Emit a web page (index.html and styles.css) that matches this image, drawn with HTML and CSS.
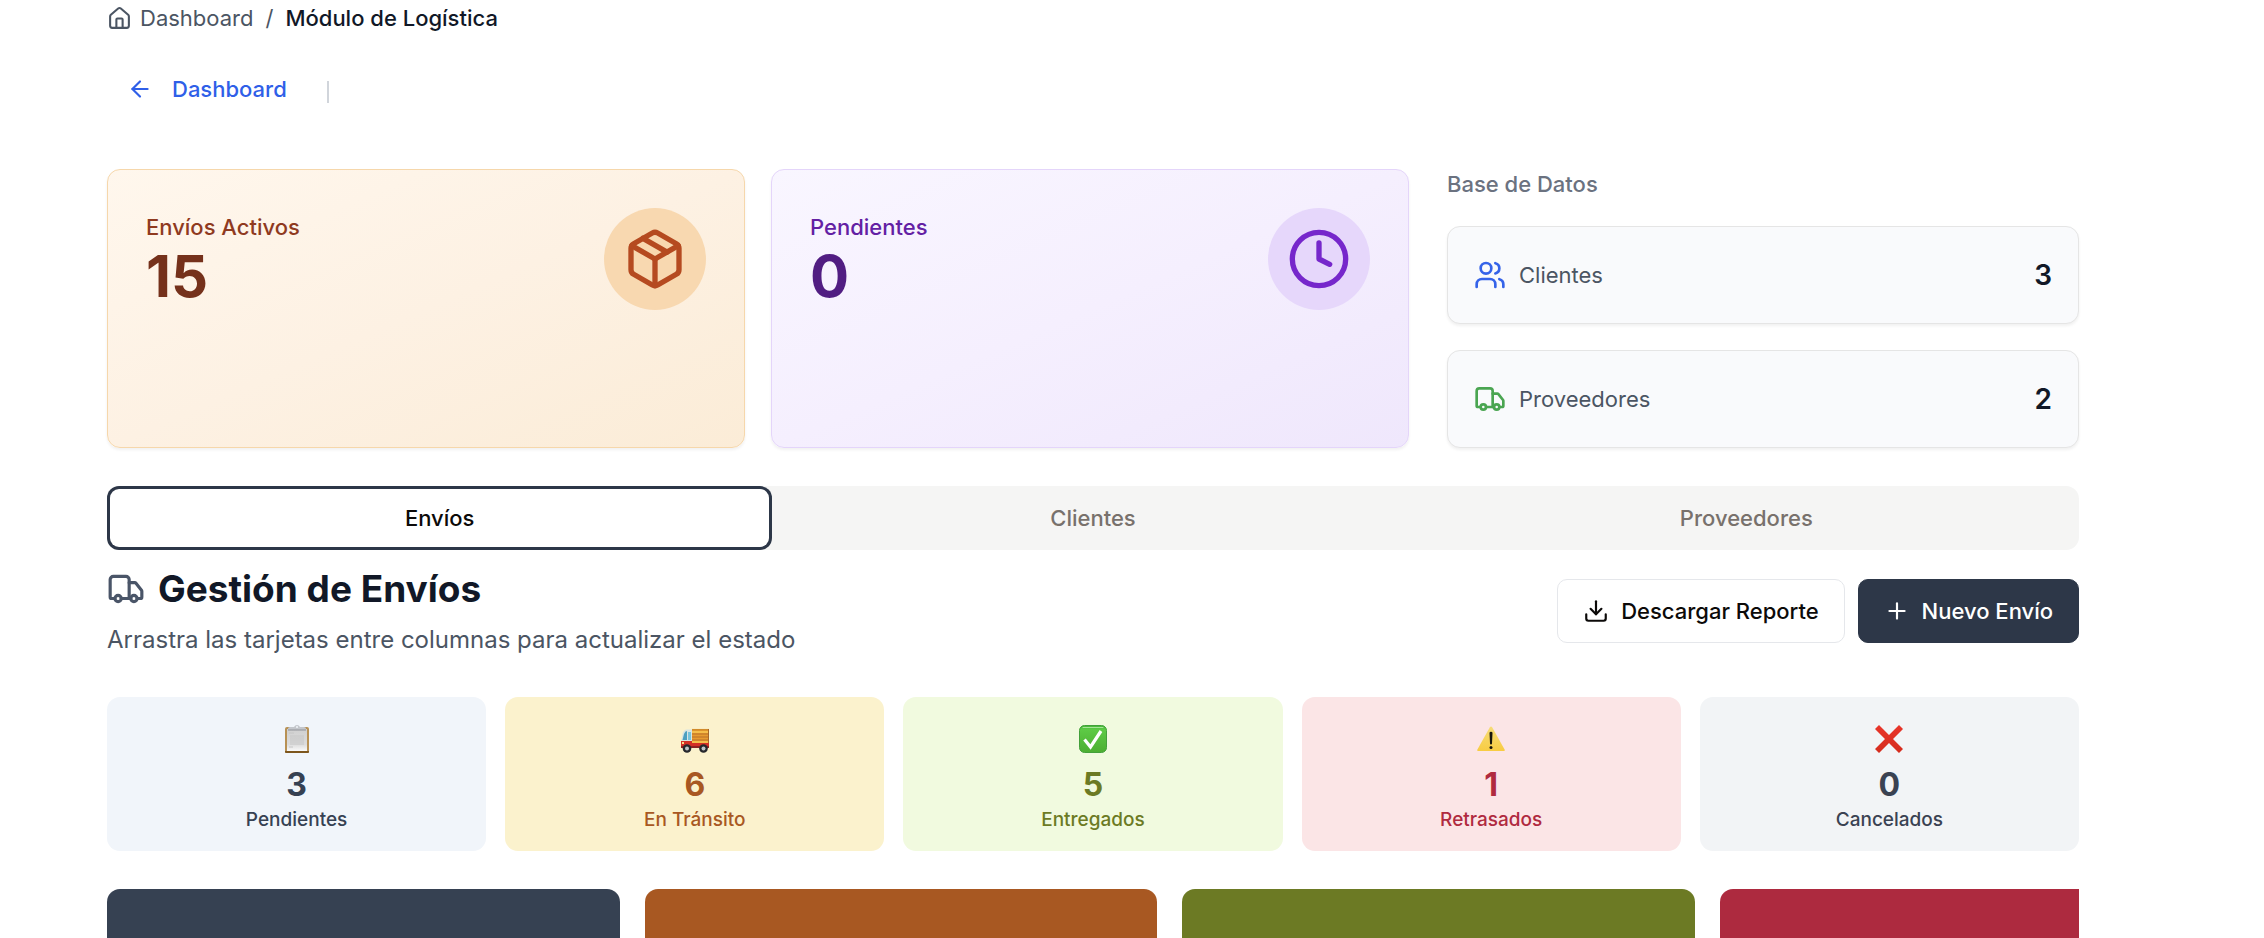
FILE: index.html
```html
<!DOCTYPE html>
<html lang="es">
<head>
<meta charset="utf-8">
<meta name="viewport" content="width=device-width, initial-scale=1">
<title>Módulo de Logística</title>
<link rel="stylesheet" href="styles.css">
</head>
<body>
<svg class="sprite" aria-hidden="true">
  <symbol id="truck" viewBox="0 0 24 24"><path d="M14 18V6a2 2 0 0 0-2-2H4a2 2 0 0 0-2 2v11a1 1 0 0 0 1 1h2"/><path d="M15 18H9"/><path d="M19 18h2a1 1 0 0 0 1-1v-3.650a1 1 0 0 0-.22-.624l-3.480-4.350A1 1 0 0 0 17.520 8H14"/><circle cx="17" cy="18" r="2"/><circle cx="7" cy="18" r="2"/></symbol>
</svg>
<main class="page">
  <nav class="crumbs" aria-label="Ruta">
    <a href="#" class="crumb-link"><svg class="icon crumb-icon" viewBox="0 0 24 24"><path d="M15 21v-8a1 1 0 0 0-1-1h-4a1 1 0 0 0-1 1v8"/><path d="M3 10a2 2 0 0 1 .709-1.528l7-5.999a2 2 0 0 1 2.582 0l7 5.999A2 2 0 0 1 21 10v9a2 2 0 0 1-2 2H5a2 2 0 0 1-2-2z"/></svg>Dashboard</a>
    <span>/</span>
    <span class="crumb-current">Módulo de Logística</span>
  </nav>
  <div class="backbar">
    <a href="#" class="back"><svg class="icon back-icon" viewBox="0 0 24 24"><path d="m12 19-7-7 7-7"/><path d="M19 12H5"/></svg>Dashboard</a>
    <span class="divider"></span>
  </div>

  <section class="overview">
    <article class="kpi kpi-orange">
      <div><p class="kpi-label">Envíos Activos</p><p class="kpi-value">15</p></div>
      <span class="kpi-badge"><svg class="icon kpi-icon" viewBox="0 0 24 24"><path d="M11 21.730a2 2 0 0 0 2 0l7-4A2 2 0 0 0 21 16V8a2 2 0 0 0-1-1.730l-7-4a2 2 0 0 0-2 0l-7 4A2 2 0 0 0 3 8v8a2 2 0 0 0 1 1.730z"/><path d="M12 22V12"/><path d="M3.290 7 12 12l8.710-5"/><path d="m7.500 4.270 9 5.150"/></svg></span>
    </article>
    <article class="kpi kpi-purple">
      <div><p class="kpi-label">Pendientes</p><p class="kpi-value">0</p></div>
      <span class="kpi-badge"><svg class="icon kpi-icon" viewBox="0 0 24 24"><circle cx="12" cy="12" r="10"/><path d="M12 6v6l4 2"/></svg></span>
    </article>
    <div class="database">
      <h2 class="database-title">Base de Datos</h2>
      <div class="record"><svg class="icon record-icon blue" viewBox="0 0 24 24"><path d="M16 21v-2a4 4 0 0 0-4-4H6a4 4 0 0 0-4 4v2"/><circle cx="9" cy="7" r="4"/><path d="M22 21v-2a4 4 0 0 0-3-3.870"/><path d="M16 3.130a4 4 0 0 1 0 7.750"/></svg><span>Clientes</span><strong class="record-count">3</strong></div>
      <div class="record"><svg class="icon record-icon green"><use href="#truck"/></svg><span>Proveedores</span><strong class="record-count">2</strong></div>
    </div>
  </section>

  <div class="tabs" role="tablist">
    <button class="tab tab-active" role="tab" aria-selected="true">Envíos</button>
    <button class="tab" role="tab" aria-selected="false">Clientes</button>
    <button class="tab" role="tab" aria-selected="false">Proveedores</button>
  </div>

  <header class="heading">
    <div>
      <h1 class="title"><svg class="icon title-icon"><use href="#truck"/></svg>Gestión de Envíos</h1>
      <p class="subtitle">Arrastra las tarjetas entre columnas para actualizar el estado</p>
    </div>
    <div class="actions">
      <button class="button"><svg class="icon button-icon" viewBox="0 0 24 24"><path d="M21 15v4a2 2 0 0 1-2 2H5a2 2 0 0 1-2-2v-4"/><path d="m7 10 5 5 5-5"/><path d="M12 15V3"/></svg>Descargar Reporte</button>
      <button class="button button-primary"><svg class="icon button-icon" viewBox="0 0 24 24"><path d="M5 12h14"/><path d="M12 5v14"/></svg>Nuevo Envío</button>
    </div>
  </header>

  <section class="stats">
    <article class="stat stat-slate">
      <svg class="emoji" viewBox="0 0 28 28"><defs><linearGradient id="paper" x2="0" y2="1"><stop stop-color="#d0d0d0"/><stop offset=".7" stop-color="#dcdcdc"/><stop offset="1" stop-color="#fafafa"/></linearGradient></defs><rect x="2" y="2" width="24" height="26" rx="2" fill="#b89154"/><path d="M2 26h24v1q0 1-1 1H3q-1 0-1-1z" fill="#7d561d"/><rect x="4" y="4" width="20" height="22" fill="url(#paper)"/><path d="M6 8h5M7 11h14M7 13h14M7 15h14M7 17h14M7 19h14M6 22h4" stroke="#c6c6c6"/><path d="M5 5V3.500Q5 2 7 2h4q1-2 3-2t3 2h4q2 0 2 1.500V5z" fill="#c3c6cb"/><path d="M5 5h18" stroke="#909297"/><circle cx="14" cy="2" r="1" fill="#f1f5f9"/></svg>
      <strong class="stat-value">3</strong><span class="stat-label">Pendientes</span>
    </article>
    <article class="stat stat-amber">
      <svg class="emoji" viewBox="0 0 28 28"><path d="M11 4h17v16H11z" fill="#e79a30"/><path d="M11 4.700h17" stroke="#d18b2b" stroke-width="1.500"/><path d="M11 7h17M11 17h17" stroke="#f5bd4a" stroke-width="2"/><path d="M11 9h17M11 12h17M11 15h17" stroke="#b9702a"/><path d="M27.500 4v16" stroke="#a8672a"/><path d="M0 17 1.500 9Q2.500 4.500 6 4.500h5V23H1q-1 0-1-1z" fill="#d8e5e4"/><path d="M1.500 15 3 9q1-3 3-3v9z" fill="#4c9fc0"/><path d="M7 7h3v8H7z" fill="#78c3dc"/><path d="M0 16h11v2h17v4H0z" fill="#d42f25"/><path d="M0 21h28v2H0z" fill="#8e2322"/><path d="M1 17h2v2H1z" fill="#f8d98b"/><circle cx="6" cy="23.500" r="4.300" fill="#26282c"/><circle cx="6" cy="23.500" r="2" fill="#bfc3c7"/><circle cx="22.500" cy="23.500" r="4.300" fill="#26282c"/><circle cx="22.500" cy="23.500" r="2" fill="#bfc3c7"/></svg>
      <strong class="stat-value">6</strong><span class="stat-label">En Tránsito</span>
    </article>
    <article class="stat stat-lime">
      <svg class="emoji" viewBox="0 0 28 28"><defs><linearGradient id="green" x2="0" y2="1"><stop stop-color="#45b63a"/><stop offset=".15" stop-color="#5dca45"/><stop offset="1" stop-color="#4cae32"/></linearGradient></defs><rect x=".5" y=".5" width="27" height="27" rx="5" fill="url(#green)" stroke="#43a03b"/><path d="M4 2.500h20" stroke="#a5e496" stroke-linecap="round"/><path d="m5.500 14.500 6 7.500L22 6" fill="none" stroke="#fff" stroke-width="3.200"/></svg>
      <strong class="stat-value">5</strong><span class="stat-label">Entregados</span>
    </article>
    <article class="stat stat-rose">
      <svg class="emoji" viewBox="0 0 28 28"><defs><linearGradient id="yellow" x2="0" y2="1"><stop stop-color="#f6dc78"/><stop offset="1" stop-color="#f8cc42"/></linearGradient></defs><path d="M12.700 2.500q1.300-2 2.600 0l12.300 22q.8 1.500-.8 1.500H1.200q-1.600 0-.8-1.500z" fill="url(#yellow)"/><path d="M12.500 8q0-1.300 1.500-1.300T15.500 8L15 18.500q0 1-1 1t-1-1z" fill="#17150c"/><circle cx="14" cy="22.500" r="1.500" fill="#17150c"/></svg>
      <strong class="stat-value">1</strong><span class="stat-label">Retrasados</span>
    </article>
    <article class="stat stat-gray">
      <svg class="emoji" viewBox="0 0 28 28"><defs><linearGradient id="red" x2="0" y2="1"><stop stop-color="#e9352a"/><stop offset="1" stop-color="#d42c1d"/></linearGradient></defs><path d="m4 0 10 10L24 0l4 4-10 10 10 10-4 4-10-10L4 28l-4-4 10-10L0 4z" fill="url(#red)"/></svg>
      <strong class="stat-value">0</strong><span class="stat-label">Cancelados</span>
    </article>
  </section>

  <section class="board">
    <div class="column column-slate"><h2 class="column-title">Pendientes</h2></div>
    <div class="column column-amber"><h2 class="column-title">En Tránsito</h2></div>
    <div class="column column-lime"><h2 class="column-title">Entregados</h2></div>
    <div class="column column-rose"><h2 class="column-title">Retrasados</h2></div>
  </section>
</main>
</body>
</html>
```

FILE: styles.css
```css
* { box-sizing: border-box; }
html { overflow: hidden; }
body { margin: 0; background: #fff; color: #111827; font-family: Inter, "Liberation Sans", sans-serif; font-size: 22px; line-height: 32px; }
p, h1, h2 { margin: 0; }
a { color: inherit; text-decoration: none; }
button { font: inherit; font-weight: 500; cursor: pointer; }
.sprite { position: absolute; width: 0; height: 0; }
.icon { flex: none; fill: none; stroke: currentColor; stroke-width: 2; stroke-linecap: round; stroke-linejoin: round; }

.page { margin: 0 185px 0 107px; padding-top: 2px; }

.crumbs { display: flex; gap: 12px; color: #4b5563; }
.crumb-link { display: flex; align-items: center; gap: 8px; }
.crumb-icon { width: 25px; height: 25px; }
.crumb-current { color: #111827; font-weight: 500; }

.backbar { display: flex; align-items: center; gap: 40px; margin-top: 39px; padding-left: 20px; }
.back { display: flex; align-items: center; gap: 19px; color: #2f5fe8; font-weight: 500; }
.back-icon { width: 26px; height: 26px; }
.divider { width: 2px; height: 22px; margin-top: 6px; background: #d1d5db; }

.overview { display: grid; grid-template-columns: 638fr 638fr 644fr; gap: 26px; margin-top: 64px; }
.kpi { display: flex; justify-content: space-between; align-items: flex-start; padding: 38px; border: 1px solid; border-radius: 13px; box-shadow: 0 2px 3px rgba(0, 0, 0, .06); }
.kpi-orange { border-color: #f6d7ab; background: linear-gradient(to bottom right, #fff7ed, #fdf1e3 50%, #fbecd7); color: #8f3a1f; }
.kpi-purple { border-color: #e4d5fa; background: linear-gradient(to bottom right, #f9f6ff, #f5effe 50%, #efe7fc); color: #6320a4; }
.kpi-label { padding-top: 3px; font-weight: 500; }
.kpi-value { font-size: 58px; line-height: 66px; font-weight: 700; }
.kpi-orange .kpi-value { color: #75311b; }
.kpi-purple .kpi-value { color: #511d82; }
.kpi-badge { display: flex; padding: 19px; border-radius: 50%; }
.kpi-orange .kpi-badge { background: #f8d8b0; color: #b54a20; }
.kpi-purple .kpi-badge { background: #e6d7fb; color: #7627cb; }
.kpi-icon { width: 64px; height: 64px; }

.database { display: flex; flex-direction: column; gap: 26px; padding-left: 12px; }
.database-title { color: #6b7280; font-size: 22px; line-height: 31px; font-weight: 500; }
.record { display: flex; align-items: center; gap: 13px; padding: 32px 26px; border: 1px solid #e5e5e5; border-radius: 13px; background: #f9fafc; color: #4b5563; box-shadow: 0 2px 3px rgba(0, 0, 0, .06); }
.record-icon { width: 32px; height: 32px; }
.blue { color: #3563e9; }
.green { color: #4aa551; }
.record-count { margin-left: auto; color: #111827; font-size: 28px; font-weight: 600; }

.tabs { display: grid; grid-template-columns: repeat(3, 1fr); margin-top: 38px; padding: 6px; border-radius: 13px; background: #f5f5f4; }
.tab { height: 52px; border: 0; border-radius: 6px; background: none; color: #78716c; }
.tab-active { background: #fff; color: #0c0a09; box-shadow: 0 0 0 3px #fff, 0 0 0 6px #2d3748; }

.heading { display: flex; justify-content: space-between; align-items: center; margin-top: 13px; }
.title { display: flex; align-items: center; gap: 13px; font-size: 37px; line-height: 52px; font-weight: 700; }
.title-icon { width: 38px; height: 38px; color: #4a5568; }
.subtitle { margin-top: 6px; color: #4b5563; font-size: 24px; line-height: 38px; }
.actions { display: flex; gap: 13px; }
.button { display: flex; align-items: center; gap: 12px; height: 64px; padding: 0 25px; border: 1px solid #e5e7eb; border-radius: 10px; background: #fff; color: #0c0a09; }
.button-primary { border-color: #2d3748; background: #2d3748; color: #fff; }
.button-icon { width: 26px; height: 26px; }

.stats { display: grid; grid-template-columns: repeat(5, 1fr); gap: 19px; margin-top: 38px; }
.stat { display: flex; flex-direction: column; align-items: center; padding: 28px 24px 17px; border-radius: 13px; }
.emoji { width: 28px; height: 28px; }
.stat-value { margin-top: 12px; font-size: 32px; line-height: 40px; font-weight: 700; }
.stat-label { font-size: 19px; line-height: 29px; font-weight: 500; }
.stat-slate { background: #f1f5fa; color: #364152; }
.stat-amber { background: #fbf2cd; color: #a85822; }
.stat-lime { background: #f1fadf; color: #6c7a24; }
.stat-rose { background: #fbe5e6; color: #b02a3f; }
.stat-gray { background: #f2f4f6; color: #3a4252; }

.board { display: flex; gap: 25px; margin-top: 38px; overflow: hidden; }
.column { flex: 0 0 26%; padding: 43px 26px 43px 82px; border-radius: 13px; color: #fff; }
.column-title { font-size: 28px; line-height: 40px; font-weight: 600; }
.column-slate { background: #364152; }
.column-amber { background: #a85822; }
.column-lime { background: #6c7a24; }
.column-rose { background: #ad2a3f; }
```
